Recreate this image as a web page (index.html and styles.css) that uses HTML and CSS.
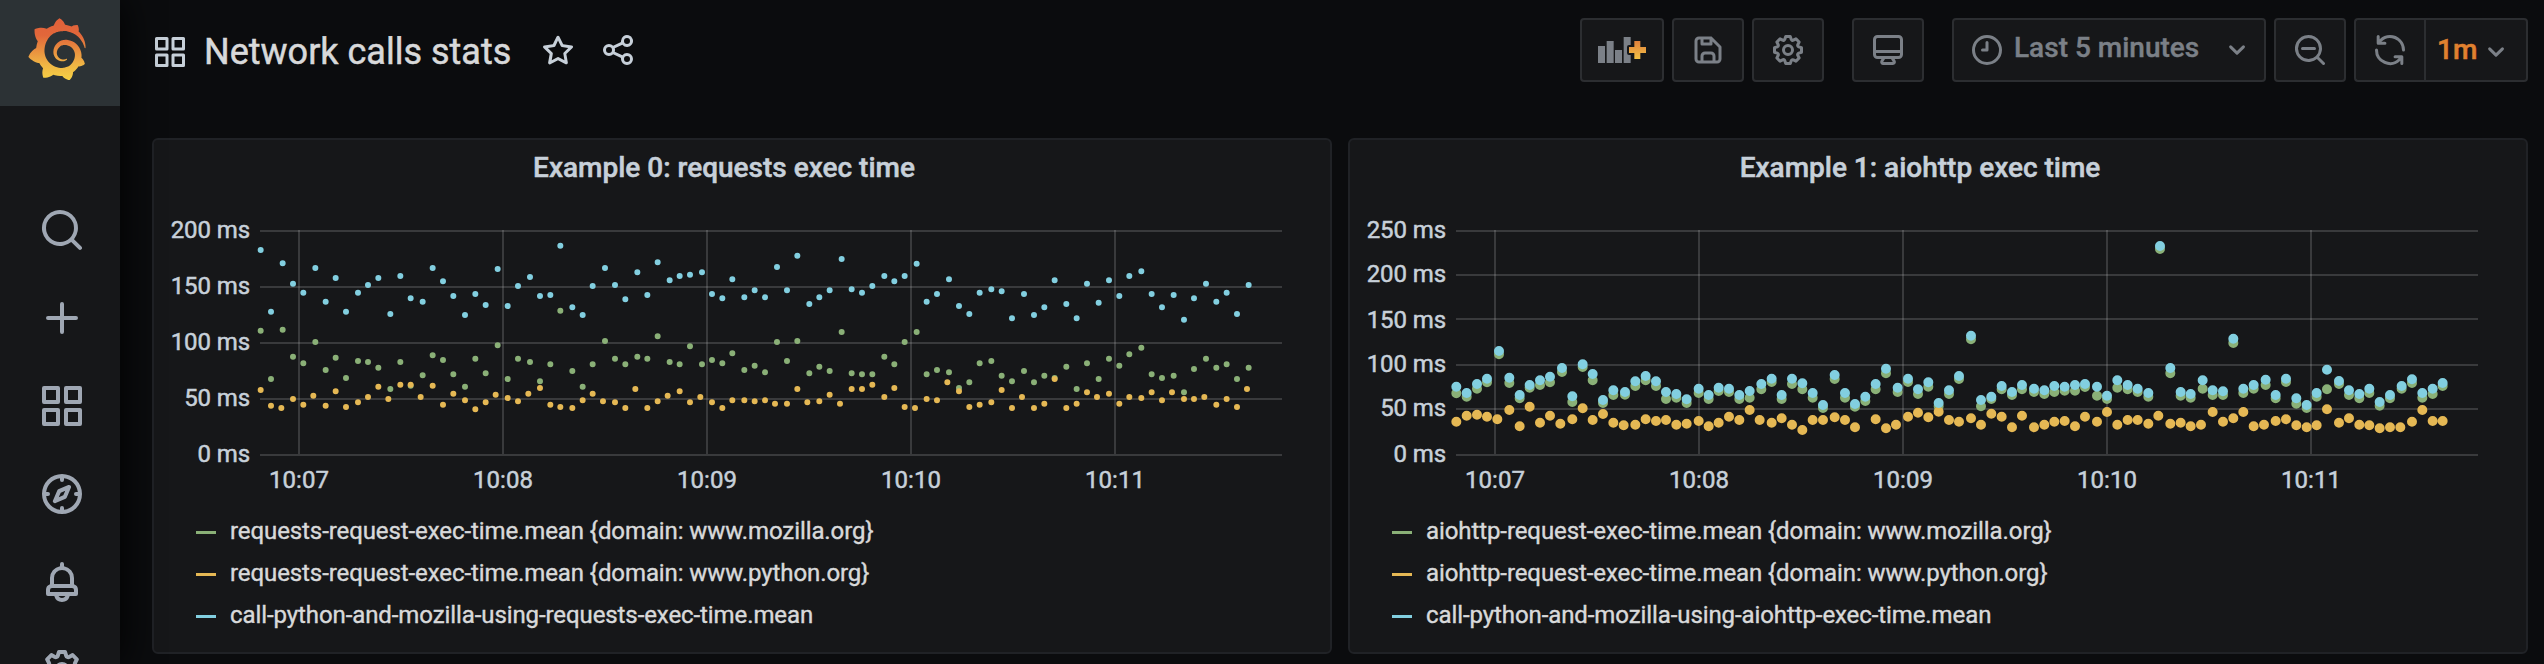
FILE: index.html
```html
<!DOCTYPE html>
<html lang="en">
<head>
<meta charset="utf-8">
<title>Network calls stats</title>
<link rel="stylesheet" href="styles.css">
</head>
<body>
<svg class="defs" width="0" height="0" aria-hidden="true">
  <defs>
    <symbol id="i-search" viewBox="0 0 24 24"><path d="M21.71,20.29,18,16.61A9,9,0,1,0,16.61,18l3.68,3.68a1,1,0,0,0,1.42,0A1,1,0,0,0,21.71,20.29ZM11,18a7,7,0,1,1,7-7A7,7,0,0,1,11,18Z"/></symbol>
    <symbol id="i-plus" viewBox="0 0 24 24"><path d="M19,11H13V5a1,1,0,0,0-2,0v6H5a1,1,0,0,0,0,2h6v6a1,1,0,0,0,2,0V13h6a1,1,0,0,0,0-2Z"/></symbol>
    <symbol id="i-apps" viewBox="0 0 24 24"><path d="M10,13H3a1,1,0,0,0-1,1v7a1,1,0,0,0,1,1h7a1,1,0,0,0,1-1V14A1,1,0,0,0,10,13ZM9,20H4V15H9ZM21,2H14a1,1,0,0,0-1,1v7a1,1,0,0,0,1,1h7a1,1,0,0,0,1-1V3A1,1,0,0,0,21,2ZM20,9H15V4h5Zm1,4H14a1,1,0,0,0-1,1v7a1,1,0,0,0,1,1h7a1,1,0,0,0,1-1V14A1,1,0,0,0,21,13Zm-1,7H15V15h5ZM10,2H3A1,1,0,0,0,2,3v7a1,1,0,0,0,1,1h7a1,1,0,0,0,1-1V3A1,1,0,0,0,10,2ZM9,9H4V4H9Z"/></symbol>
    <symbol id="i-compass" viewBox="0 0 24 24"><path d="M12,2A10,10,0,1,0,22,12,10,10,0,0,0,12,2Zm1,17.93V19a1,1,0,0,0-2,0v.93A8,8,0,0,1,4.07,13H5a1,1,0,0,0,0-2H4.07A8,8,0,0,1,11,4.07V5a1,1,0,0,0,2,0V4.07A8,8,0,0,1,19.93,11H19a1,1,0,0,0,0,2h.93A8,8,0,0,1,13,19.93ZM15.14,7.55l-5,2.12a1,1,0,0,0-.52.52l-2.12,5a1,1,0,0,0,.21,1.1,1,1,0,0,0,.7.3.93.93,0,0,0,.4-.09l5-2.12a1,1,0,0,0,.52-.52l2.12-5a1,1,0,0,0-1.31-1.31Zm-2.49,5.1-2.28,1,1-2.28,2.28-1Z"/></symbol>
    <symbol id="i-bell" viewBox="0 0 24 24"><path d="M18,13.18V10a6,6,0,0,0-5-5.91V3a1,1,0,0,0-2,0V4.09A6,6,0,0,0,6,10v3.18A3,3,0,0,0,4,16v2a1,1,0,0,0,1,1H8.14a4,4,0,0,0,7.72,0H19a1,1,0,0,0,1-1V16A3,3,0,0,0,18,13.18ZM8,10a4,4,0,0,1,8,0v3H8Zm4,10a2,2,0,0,1-1.72-1h3.44A2,2,0,0,1,12,20Zm6-3H6V16a1,1,0,0,1,1-1H17a1,1,0,0,1,1,1Z"/></symbol>
    <symbol id="i-cog" viewBox="0 0 24 24"><path d="M21.32,9.55l-1.89-.63.89-1.78A1,1,0,0,0,20.13,6L18,3.87a1,1,0,0,0-1.15-.19l-1.78.89-.63-1.89A1,1,0,0,0,13.5,2h-3a1,1,0,0,0-.95.68L8.92,4.57,7.14,3.68A1,1,0,0,0,6,3.87L3.87,6a1,1,0,0,0-.19,1.15l.89,1.78-1.89.63A1,1,0,0,0,2,10.5v3a1,1,0,0,0,.68.95l1.89.63-.89,1.78A1,1,0,0,0,3.87,18L6,20.13a1,1,0,0,0,1.15.19l1.78-.89.63,1.89a1,1,0,0,0,.95.68h3a1,1,0,0,0,.95-.68l.63-1.89,1.78.89A1,1,0,0,0,18,20.13L20.13,18a1,1,0,0,0,.19-1.15l-.89-1.78,1.89-.63A1,1,0,0,0,22,13.5v-3A1,1,0,0,0,21.32,9.55ZM20,12.78l-1.2.4A2,2,0,0,0,17.64,16l.57,1.14-1.1,1.1L16,17.64a2,2,0,0,0-2.79,1.16l-.4,1.2H11.22l-.4-1.2A2,2,0,0,0,8,17.64l-1.14.57-1.1-1.1L6.36,16A2,2,0,0,0,5.2,13.18L4,12.78V11.22l1.2-.4A2,2,0,0,0,6.36,8L5.79,6.89l1.1-1.1L8,6.36A2,2,0,0,0,10.82,5.2l.4-1.2h1.56l.4,1.2A2,2,0,0,0,16,6.36l1.14-.57,1.1,1.1L17.64,8a2,2,0,0,0,1.16,2.79l1.2.4ZM12,8a4,4,0,1,0,4,4A4,4,0,0,0,12,8Zm0,6a2,2,0,1,1,2-2A2,2,0,0,1,12,14Z"/></symbol>
    <symbol id="i-star" viewBox="0 0 24 24"><path d="M22,9.67A1,1,0,0,0,21.14,9l-5.69-.83L12.9,3a1,1,0,0,0-1.8,0L8.55,8.16,2.86,9a1,1,0,0,0-.81.68,1,1,0,0,0,.25,1l4.13,4-1,5.68A1,1,0,0,0,6.9,21.44L12,18.77l5.1,2.67a.93.93,0,0,0,.46.12,1,1,0,0,0,.59-.19,1,1,0,0,0,.4-1l-1-5.68,4.13-4A1,1,0,0,0,22,9.67Zm-6.15,4a1,1,0,0,0-.29.88l.72,4.2-3.76-2a1.06,1.06,0,0,0-.94,0l-3.76,2,.72-4.2a1,1,0,0,0-.29-.88l-3-3,4.21-.61a1,1,0,0,0,.76-.55L12,5.7l1.88,3.82a1,1,0,0,0,.76.55l4.21.61Z"/></symbol>
    <symbol id="i-share" viewBox="0 0 24 24"><path d="M18,14a4,4,0,0,0-3.08,1.48l-5.1-2.35a3.64,3.64,0,0,0,0-2.26l5.1-2.35A4,4,0,1,0,14,6a4.17,4.17,0,0,0,.07.71L8.79,9.14a4,4,0,1,0,0,5.72l5.28,2.43A4.17,4.17,0,0,0,14,18a4,4,0,1,0,4-4ZM18,4a2,2,0,1,1-2,2A2,2,0,0,1,18,4ZM6,14a2,2,0,1,1,2-2A2,2,0,0,1,6,14Zm12,6a2,2,0,1,1,2-2A2,2,0,0,1,18,20Z"/></symbol>
    <symbol id="i-save" viewBox="0 0 24 24"><path d="M20.71,9.29l-6-6a1,1,0,0,0-.32-.21A1.09,1.09,0,0,0,14,3H6A3,3,0,0,0,3,6V18a3,3,0,0,0,3,3H18a3,3,0,0,0,3-3V10A1,1,0,0,0,20.71,9.29ZM9,5h4V7H9Zm6,14H9V16a1,1,0,0,1,1-1h4a1,1,0,0,1,1,1Zm4-1a1,1,0,0,1-1,1H17V16a3,3,0,0,0-3-3H10a3,3,0,0,0-3,3v3H6a1,1,0,0,1-1-1V6A1,1,0,0,1,6,5H7V8A1,1,0,0,0,8,9h6a1,1,0,0,0,1-1V6.41l4,4Z"/></symbol>
    <symbol id="i-monitor" viewBox="0 0 24 24"><path d="M19,2H5A3,3,0,0,0,2,5V15a3,3,0,0,0,3,3H7.64l-.58,1a2,2,0,0,0,0,2,2,2,0,0,0,1.75,1h6.46A2,2,0,0,0,17,21a2,2,0,0,0,0-2l-.59-1H19a3,3,0,0,0,3-3V5A3,3,0,0,0,19,2ZM8.77,20,10,18H14l1.2,2ZM20,15a1,1,0,0,1-1,1H5a1,1,0,0,1-1-1V14H20Zm0-3H4V5A1,1,0,0,1,5,4H19a1,1,0,0,1,1,1Z"/></symbol>
    <symbol id="i-clock" viewBox="0 0 24 24"><path d="M12,2A10,10,0,1,0,22,12,10,10,0,0,0,12,2Zm0,18a8,8,0,1,1,8-8A8,8,0,0,1,12,20ZM12,6a1,1,0,0,0-1,1v4H9a1,1,0,0,0,0,2h3a1,1,0,0,0,1-1V7A1,1,0,0,0,12,6Z"/></symbol>
    <symbol id="i-zoomout" viewBox="0 0 24 24"><path d="M21.71,20.29,18,16.61A9,9,0,1,0,16.61,18l3.68,3.68a1,1,0,0,0,1.42-1.42ZM11,18a7,7,0,1,1,7-7A7,7,0,0,1,11,18Zm4-8H7a1,1,0,0,0,0,2h8a1,1,0,0,0,0-2Z"/></symbol>
    <symbol id="i-sync" viewBox="0 0 24 24"><path d="M19.91,15.51H15.38a1,1,0,0,0,0,2h2.4A8,8,0,0,1,4,12a1,1,0,1,0-2,0,10,10,0,0,0,16.88,7.23V21a1,1,0,0,0,2,0V16.5A1,1,0,0,0,19.91,15.51ZM12,2A10,10,0,0,0,5.12,4.77V3a1,1,0,0,0-2,0V7.5a1,1,0,0,0,1,1h4.5a1,1,0,0,0,0-2H6.22A8,8,0,0,1,20,12a1,1,0,0,0,2,0A10,10,0,0,0,12,2Z"/></symbol>
    <symbol id="i-down" viewBox="0 0 24 24"><path d="M17,9.17a1,1,0,0,0-1.41,0L12,12.71,8.46,9.17a1,1,0,0,0-1.41,0,1,1,0,0,0,0,1.42l4.24,4.24a1,1,0,0,0,1.42,0L17,10.59A1,1,0,0,0,17,9.17Z"/></symbol>
  </defs>
</svg>

<div class="app">
  <nav class="sidemenu">
    <a class="logo">
      <svg class="logo-mark" viewBox="0 0 351 365">
        <defs><linearGradient id="flame" x1="0" y1="1" x2="0" y2="0"><stop offset="0" stop-color="#f6d145"/><stop offset=".25" stop-color="#efb544"/><stop offset=".72" stop-color="#e2673a"/><stop offset="1" stop-color="#e0603a"/></linearGradient></defs>
        <path fill="url(#flame)" d="M342,161.2c-0.6-6.1-1.6-13.1-3.6-20.9c-2-7.7-5-16.2-9.4-25c-4.4-8.8-10.1-17.9-17.5-26.8c-2.9-3.5-6.1-6.9-9.5-10.2c5.1-20.3-6.2-37.9-6.2-37.9c-19.5-1.2-31.9,6.1-36.5,9.4c-0.8-0.3-1.5-0.7-2.3-1c-3.3-1.3-6.7-2.6-10.3-3.7c-3.5-1.1-7.1-2.1-10.8-3c-3.7-0.9-7.4-1.6-11.2-2.2c-0.7-0.1-1.3-0.2-2-0.3c-8.5-27.2-32.9-38.6-32.9-38.6c-27.3,17.3-32.4,41.5-32.4,41.5s-0.1,0.5-0.3,1.4c-1.5,0.4-3,0.9-4.5,1.3c-2.1,0.6-4.2,1.4-6.2,2.2c-2.1,0.8-4.1,1.6-6.2,2.5c-4.1,1.8-8.2,3.8-12.2,6c-3.9,2.2-7.7,4.6-11.4,7.1c-0.5-0.2-1-0.4-1-0.4c-37.8-14.4-71.3,2.9-71.3,2.9c-3.1,40.2,15.1,65.5,18.7,70.1c-0.9,2.5-1.7,5-2.5,7.5c-2.8,9.1-4.9,18.4-6.2,28.1c-0.2,1.4-0.4,2.8-0.5,4.2C18.8,192.7,8.5,228,8.5,228c29.1,33.5,63.1,35.6,63.1,35.6c0,0,0.1-0.1,0.1-0.1c4.3,7.7,9.3,15,14.9,21.9c2.4,2.9,4.8,5.6,7.4,8.3c-10.6,30.4,1.5,55.6,1.5,55.6c32.4,1.2,53.7-14.2,58.2-17.7c3.2,1.1,6.5,2.1,9.8,2.9c10,2.6,20.2,4.1,30.4,4.5c2.5,0.1,5.1,0.2,7.6,0.1l1.2,0l0.8,0l1.6,0l1.6-0.1l0,0.1c15.3,21.8,42.1,24.9,42.1,24.9c19.1-20.1,20.2-40.1,20.2-44.4l0,0c0,0,0-0.1,0-0.3c0-0.4,0-0.6,0-0.6l0,0c0-0.3,0-0.6,0-0.9c4-2.8,7.8-5.8,11.4-9.1c7.6-6.9,14.3-14.8,19.9-23.3c0.5-0.8,1-1.6,1.5-2.4c21.6,1.2,36.9-13.4,36.9-13.4c-3.6-22.5-16.4-33.5-19.1-35.6l0,0c0,0-0.1-0.1-0.3-0.2c-0.2-0.1-0.2-0.2-0.2-0.2c0,0,0,0,0,0c-0.1-0.1-0.3-0.2-0.5-0.3c0.1-1.4,0.2-2.7,0.3-4.1c0.2-2.4,0.2-4.9,0.2-7.3l0-1.8l0-0.9l0-0.5c0-0.6,0-0.4,0-0.6l-0.1-1.5l-0.1-2c0-0.7-0.1-1.3-0.2-1.9c-0.1-0.6-0.1-1.3-0.2-1.9l-0.2-1.9l-0.3-1.9c-0.4-2.5-0.8-4.9-1.4-7.4c-2.3-9.7-6.1-18.9-11-27.2c-5-8.3-11.2-15.6-18.3-21.8c-7-6.2-14.9-11.2-23.1-14.9c-8.3-3.7-16.9-6.1-25.5-7.2c-4.3-0.6-8.6-0.8-12.9-0.7l-1.6,0l-0.4,0c-0.1,0-0.6,0-0.5,0l-0.7,0l-1.6,0.1c-0.6,0-1.2,0.1-1.7,0.1c-2.2,0.2-4.4,0.5-6.5,0.9c-8.6,1.6-16.7,4.7-23.8,9c-7.1,4.3-13.3,9.6-18.3,15.6c-5,6-8.9,12.7-11.6,19.6c-2.7,6.9-4.2,14.1-4.6,21c-0.1,1.7-0.1,3.5-0.1,5.2c0,0.4,0,0.9,0,1.3l0.1,1.4c0.1,0.8,0.1,1.7,0.2,2.5c0.3,3.5,1,6.9,1.9,10.1c1.9,6.5,4.9,12.4,8.6,17.4c3.7,5,8.2,9.1,12.9,12.4c4.7,3.2,9.8,5.5,14.8,7c5,1.5,10,2.1,14.7,2.1c0.6,0,1.2,0,1.7,0c0.3,0,0.6,0,0.9,0c0.3,0,0.6,0,0.9-0.1c0.5,0,1-0.1,1.5-0.1c0.1,0,0.3,0,0.4-0.1l0.5-0.1c0.3,0,0.6-0.1,0.9-0.1c0.6-0.1,1.1-0.2,1.7-0.3c0.6-0.1,1.1-0.2,1.6-0.4c1.1-0.2,2.1-0.6,3.1-0.9c2-0.7,4-1.5,5.7-2.4c1.8-0.9,3.4-2,5-3c0.4-0.3,0.9-0.6,1.3-1c1.6-1.3,1.9-3.7,0.6-5.3c-1.1-1.4-3.1-1.8-4.7-0.9c-0.4,0.2-0.8,0.4-1.2,0.6c-1.4,0.7-2.8,1.3-4.3,1.8c-1.5,0.5-3.1,0.9-4.7,1.2c-0.8,0.1-1.6,0.2-2.5,0.3c-0.4,0-0.8,0.1-1.3,0.1c-0.4,0-0.9,0-1.2,0c-0.4,0-0.8,0-1.2,0c-0.5,0-1,0-1.5-0.1c0,0-0.3,0-0.1,0l-0.2,0l-0.3,0c-0.2,0-0.5,0-0.7-0.1c-0.5-0.1-0.9-0.1-1.4-0.2c-3.7-0.5-7.4-1.6-10.9-3.2c-3.6-1.6-7-3.8-10.1-6.6c-3.1-2.8-5.8-6.1-7.9-9.9c-2.1-3.8-3.6-8-4.3-12.4c-0.3-2.2-0.5-4.5-0.4-6.7c0-0.6,0.1-1.2,0.1-1.8c0,0.2,0-0.1,0-0.1l0-0.2l0-0.5c0-0.3,0.1-0.6,0.1-0.9c0.1-1.2,0.3-2.4,0.5-3.6c1.7-9.6,6.5-19,13.9-26.1c1.9-1.8,3.9-3.4,6-4.9c2.1-1.5,4.4-2.8,6.8-3.9c2.4-1.1,4.8-2,7.4-2.7c2.5-0.7,5.1-1.1,7.8-1.4c1.3-0.1,2.6-0.2,4-0.2c0.4,0,0.6,0,0.9,0l1.1,0l0.7,0c0.3,0,0,0,0.1,0l0.3,0l1.1,0.1c2.9,0.2,5.7,0.6,8.5,1.3c5.6,1.2,11.1,3.3,16.2,6.1c10.2,5.7,18.9,14.5,24.2,25.1c2.7,5.3,4.6,11,5.5,16.9c0.2,1.5,0.4,3,0.5,4.5l0.1,1.1l0.1,1.1c0,0.4,0,0.8,0,1.1c0,0.4,0,0.8,0,1.1l0,1l0,1.1c0,0.7-0.1,1.9-0.1,2.6c-0.1,1.6-0.3,3.3-0.5,4.9c-0.2,1.6-0.5,3.2-0.8,4.8c-0.3,1.6-0.7,3.2-1.1,4.7c-0.8,3.1-1.8,6.2-3,9.3c-2.4,6-5.6,11.8-9.4,17.1c-7.7,10.6-18.2,19.2-30.2,24.7c-6,2.7-12.3,4.7-18.8,5.7c-3.2,0.6-6.5,0.9-9.8,1l-0.6,0l-0.5,0l-1.1,0l-1.6,0l-0.8,0c0.4,0-0.1,0-0.1,0l-0.3,0c-1.8,0-3.5-0.1-5.3-0.3c-7-0.5-13.9-1.8-20.7-3.7c-6.7-1.9-13.2-4.6-19.4-7.8c-12.3-6.6-23.4-15.6-32-26.5c-4.3-5.4-8.1-11.3-11.2-17.4c-3.1-6.1-5.6-12.6-7.4-19.1c-1.8-6.6-2.9-13.3-3.4-20.1l-0.1-1.3l0-0.3l0-0.3l0-0.6l0-1.1l0-0.3l0-0.4l0-0.8l0-1.6l0-0.3c0,0,0,0.1,0-0.1l0-0.6c0-0.8,0-1.7,0-2.5c0.1-3.3,0.4-6.8,0.8-10.2c0.4-3.4,1-6.9,1.7-10.3c0.7-3.4,1.5-6.8,2.5-10.2c1.9-6.7,4.3-13.2,7.1-19.3c5.7-12.2,13.1-23.1,22-31.8c2.2-2.2,4.5-4.2,6.9-6.2c2.4-1.9,4.9-3.7,7.5-5.4c2.5-1.7,5.2-3.2,7.9-4.6c1.3-0.7,2.7-1.4,4.1-2c0.7-0.3,1.4-0.6,2.1-0.9c0.7-0.3,1.4-0.6,2.1-0.9c2.8-1.2,5.7-2.2,8.7-3.1c0.7-0.2,1.5-0.4,2.2-0.7c0.7-0.2,1.5-0.4,2.2-0.6c1.5-0.4,3-0.8,4.5-1.1c0.7-0.2,1.5-0.3,2.3-0.5c0.8-0.2,1.5-0.3,2.3-0.5c0.8-0.1,1.5-0.3,2.3-0.4l1.1-0.2l1.2-0.2c0.8-0.1,1.5-0.2,2.3-0.3c0.9-0.1,1.7-0.2,2.6-0.3c0.7-0.1,1.9-0.2,2.6-0.3c0.5-0.1,1.1-0.1,1.6-0.2l1.1-0.1l0.5-0.1l0.6,0c0.9-0.1,1.7-0.1,2.6-0.2l1.3-0.1c0,0,0.5,0,0.1,0l0.3,0l0.6,0c0.7,0,1.5-0.1,2.2-0.1c2.9-0.1,5.9-0.1,8.8,0c5.8,0.2,11.5,0.9,17,1.9c11.1,2.1,21.5,5.6,31,10.3c9.5,4.6,17.9,10.3,25.3,16.5c0.5,0.4,0.9,0.8,1.4,1.2c0.4,0.4,0.9,0.8,1.3,1.2c0.9,0.8,1.7,1.6,2.6,2.4c0.9,0.8,1.7,1.6,2.5,2.4c0.8,0.8,1.6,1.6,2.4,2.5c3.1,3.3,6,6.6,8.6,10c5.2,6.7,9.4,13.5,12.7,19.9c0.2,0.4,0.4,0.8,0.6,1.2c0.2,0.4,0.4,0.8,0.6,1.2c0.4,0.8,0.8,1.6,1.1,2.4c0.4,0.8,0.7,1.5,1.1,2.3c0.3,0.8,0.7,1.5,1,2.3c1.2,3,2.4,5.9,3.3,8.6c1.5,4.4,2.6,8.3,3.5,11.7c0.3,1.4,1.6,2.3,3,2.1c1.5-0.1,2.6-1.3,2.6-2.8C342.6,170.4,342.5,166.1,342,161.2z"/>
      </svg>
    </a>
    <div class="side-items">
      <svg class="side-icon"><use href="#i-search"/></svg>
      <svg class="side-icon"><use href="#i-plus"/></svg>
      <svg class="side-icon"><use href="#i-apps"/></svg>
      <svg class="side-icon"><use href="#i-compass"/></svg>
      <svg class="side-icon"><use href="#i-bell"/></svg>
      <svg class="side-icon"><use href="#i-cog"/></svg>
    </div>
  </nav>

  <main class="main">
    <header class="navbar">
      <svg class="icon nav-apps"><use href="#i-apps"/></svg>
      <h1 class="nav-title">Network calls stats</h1>
      <svg class="icon nav-star"><use href="#i-star"/></svg>
      <svg class="icon nav-share"><use href="#i-share"/></svg>
      <div class="toolbar">
        <button class="btn btn-add">
          <svg class="add-icon" viewBox="114 111 144 78">
            <defs>
              <linearGradient id="plus" x1="0" y1="0" x2="0" y2="1"><stop offset="0" stop-color="#e0803c"/><stop offset="1" stop-color="#f2c144"/></linearGradient>
            </defs>
            <path class="add-bars" d="M114 138h21v51h-21zM140 123h21v66h-21zM165 150h21v39h-21zM191 111h21v78h-21z"/>
            <path class="add-gap" d="M223 123h18v18h17v18h-17v18h-18v-18h-16v-18h16z"/>
            <path fill="url(#plus)" d="M223 123h18v18h17v18h-17v18h-18v-18h-16v-18h16z"/>
          </svg>
        </button>
        <button class="btn"><svg class="icon"><use href="#i-save"/></svg></button>
        <button class="btn"><svg class="icon"><use href="#i-cog"/></svg></button>
        <button class="btn btn-tv"><svg class="icon"><use href="#i-monitor"/></svg></button>
        <button class="btn btn-time"><svg class="icon"><use href="#i-clock"/></svg><span class="time-label">Last 5 minutes</span><svg class="icon"><use href="#i-down"/></svg></button>
        <button class="btn"><svg class="icon"><use href="#i-zoomout"/></svg></button>
        <div class="refresh">
          <button class="btn btn-sync"><svg class="icon"><use href="#i-sync"/></svg></button>
          <button class="btn btn-interval"><span class="interval">1m</span><svg class="icon"><use href="#i-down"/></svg></button>
        </div>
      </div>
    </header>

    <div class="grid">
      <section class="panel">
        <h2 class="panel-title">Example 0: requests exec time</h2>
        <svg class="chart" viewBox="154 200 1176 300">
          <path class="lines" d="M260 231H1282M260 287H1282M260 343H1282M260 399H1282M260 455H1282"/>
          <path class="lines" d="M299 230V454M503 230V454M707 230V454M911 230V454M1115 230V454"/>
          <g class="y-axis"><text x="250" y="238">200 ms</text><text x="250" y="294">150 ms</text><text x="250" y="350">100 ms</text><text x="250" y="406">50 ms</text><text x="250" y="462">0 ms</text></g>
          <g class="x-axis"><text x="299" y="488">10:07</text><text x="503" y="488">10:08</text><text x="707" y="488">10:09</text><text x="911" y="488">10:10</text><text x="1115" y="488">10:11</text></g>
          <g class="dots dots-small" transform="translate(150 210) scale(.33333)">
            <g class="green">
              <path d="M332 362h0M363 507h0M398 359h0M429 440h0M460 460h0M496 396h0M527 480h0M557 443h0M588 504h0M624 453h0M654 456h0M685 473h0M721 537h0M751 456h0M782 527h0M818 496h0M848 436h0M879 450h0M910 493h0M945 530h0M976 446h0M1007 490h0M1043 406h0M1073 507h0M1104 446h0M1140 456h0M1170 514h0"/>
              <path transform="translate(1170)" d="M31 463h0M61 302h0M97 483h0M128 530h0M158 463h0M195 393h0M225 446h0M256 463h0M292 440h0M322 446h0M353 379h0M389 456h0M419 463h0M450 409h0M486 463h0M516 450h0M547 460h0M577 430h0M613 480h0M644 467h0M675 487h0M711 396h0M741 453h0M772 393h0M808 490h0M838 470h0M869 483h0M905 366h0M935 490h0M966 493h0M997 493h0M1033 440h0M1063 463h0M1094 396h0M1130 366h0M1160 493h0M1191 480h0"/>
              <path transform="translate(2340)" d="M57 487h0M87 534h0M118 517h0M149 460h0M184 453h0M215 497h0M246 514h0M282 483h0M312 517h0M343 497h0M374 504h0M409 470h0M440 537h0M471 460h0M506 507h0M537 446h0M568 467h0M598 433h0M634 413h0M665 493h0M696 504h0M731 497h0M762 547h0M792 477h0M828 446h0M859 473h0M890 463h0M921 507h0M956 473h0"/>
            </g>
            <g class="yellow">
              <path d="M332 540h0M363 587h0M394 594h0M429 567h0M460 584h0M490 557h0M527 587h0M557 544h0M588 591h0M624 577h0M654 561h0M685 530h0M715 567h0M751 524h0M782 524h0M812 561h0M848 527h0M879 584h0M910 551h0M945 571h0M976 598h0M1007 577h0M1037 554h0M1073 564h0M1104 574h0M1135 551h0M1170 534h0"/>
              <path transform="translate(1170)" d="M31 584h0M61 591h0M97 594h0M128 571h0M158 551h0M189 574h0M225 577h0M256 594h0M286 537h0M322 594h0M353 574h0M383 557h0M419 544h0M450 577h0M481 561h0M516 577h0M547 594h0M577 571h0M613 571h0M644 574h0M675 571h0M705 581h0M741 581h0M772 537h0M802 577h0M838 574h0M869 554h0M900 581h0M935 537h0M966 537h0M997 524h0M1033 561h0M1063 534h0M1094 591h0M1125 594h0M1160 567h0M1191 571h0"/>
              <path transform="translate(2340)" d="M52 517h0M87 544h0M118 591h0M149 584h0M184 577h0M215 540h0M246 594h0M276 561h0M312 594h0M343 581h0M374 507h0M409 594h0M440 581h0M471 547h0M501 561h0M537 551h0M568 581h0M598 561h0M634 564h0M665 547h0M696 571h0M726 547h0M762 567h0M792 567h0M823 561h0M859 584h0M890 567h0M921 591h0M951 537h0"/>
            </g>
            <g class="blue">
              <path d="M332 120h0M363 305h0M398 160h0M429 221h0M460 248h0M496 174h0M527 275h0M557 204h0M588 305h0M624 248h0M654 225h0M685 204h0M721 312h0M751 198h0M782 265h0M818 275h0M848 174h0M879 214h0M910 258h0M945 315h0M976 252h0M1007 285h0M1043 177h0M1073 288h0M1104 228h0M1140 201h0M1170 258h0"/>
              <path transform="translate(1170)" d="M31 255h0M61 107h0M97 292h0M128 315h0M158 228h0M195 174h0M225 225h0M256 268h0M292 187h0M322 255h0M353 157h0M389 211h0M419 198h0M450 194h0M486 187h0M516 252h0M547 265h0M577 208h0M613 262h0M644 241h0M675 262h0M711 171h0M741 241h0M772 137h0M808 282h0M838 262h0M869 241h0M905 147h0M935 238h0M966 248h0M997 228h0M1033 198h0M1063 214h0M1094 198h0M1130 161h0M1160 275h0M1191 252h0"/>
              <path transform="translate(2340)" d="M57 208h0M87 288h0M118 312h0M149 248h0M184 238h0M215 244h0M246 325h0M282 252h0M312 315h0M343 292h0M374 211h0M409 282h0M440 325h0M471 221h0M506 278h0M537 211h0M568 258h0M598 198h0M634 184h0M665 252h0M696 292h0M731 255h0M762 329h0M792 265h0M828 221h0M859 275h0M890 248h0M921 312h0M956 225h0"/>
            </g>
          </g>
        </svg>
        <ul class="legend">
          <li class="legend-item"><i class="swatch green"></i>requests-request-exec-time.mean {domain: www.mozilla.org}</li>
          <li class="legend-item"><i class="swatch yellow"></i>requests-request-exec-time.mean {domain: www.python.org}</li>
          <li class="legend-item"><i class="swatch blue"></i>call-python-and-mozilla-using-requests-exec-time.mean</li>
        </ul>
      </section>

      <section class="panel">
        <h2 class="panel-title">Example 1: aiohttp exec time</h2>
        <svg class="chart" viewBox="1350 200 1176 300">
          <path class="lines" d="M1456 231H2478M1456 275H2478M1456 319H2478M1456 365H2478M1456 409H2478M1456 455H2478"/>
          <path class="lines" d="M1495 230V454M1699 230V454M1903 230V454M2107 230V454M2311 230V454"/>
          <g class="y-axis"><text x="1446" y="238">250 ms</text><text x="1446" y="282">200 ms</text><text x="1446" y="328">150 ms</text><text x="1446" y="372">100 ms</text><text x="1446" y="416">50 ms</text><text x="1446" y="462">0 ms</text></g>
          <g class="x-axis"><text x="1495" y="488">10:07</text><text x="1699" y="488">10:08</text><text x="1903" y="488">10:09</text><text x="2107" y="488">10:10</text><text x="2311" y="488">10:11</text></g>
          <g class="dots dots-large" transform="translate(1340 210) scale(.33333)">
            <g class="green">
              <path d="M349 550h0M380 560h0M411 536h0M441 517h0M477 433h0M508 519h0M539 565h0M569 533h0M600 525h0M630 517h0M666 486h0M697 576h0M728 471h0M758 511h0M789 579h0M820 555h0M855 554h0M886 528h0M917 511h0M948 528h0M978 567h0M1009 563h0M1040 579h0M1076 549h0M1106 567h0M1136 543h0M1167 546h0"/>
              <path transform="translate(1200)" d="M-2 567h0M29 563h0M64 538h0M95 516h0M125 567h0M156 522h0M187 538h0M218 563h0M249 594h0M284 507h0M315 563h0M345 590h0M376 573h0M407 538h0M438 490h0M473 546h0M504 516h0M534 552h0M565 530h0M596 589h0M627 552h0M657 507h0M693 388h0M723 589h0M754 567h0M785 538h0M816 555h0M846 538h0M882 546h0M913 552h0M943 546h0M974 542h0M1005 542h0M1035 531h0M1071 557h0M1101 567h0M1132 533h0M1163 538h0M1193 546h0"/>
              <path transform="translate(2400)" d="M25 560h0M60 117h0M91 490h0M122 557h0M152 563h0M188 536h0M218 555h0M249 555h0M280 399h0M310 549h0M341 536h0M377 525h0M407 565h0M438 516h0M469 581h0M500 594h0M530 560h0M561 538h0M597 522h0M627 555h0M658 565h0M688 549h0M719 587h0M750 565h0M785 536h0M816 519h0M847 563h0M878 552h0M908 528h0"/>
            </g>
            <g class="yellow">
              <path d="M349 635h0M380 617h0M411 614h0M441 620h0M472 628h0M508 600h0M539 649h0M569 590h0M600 638h0M630 617h0M661 641h0M697 628h0M728 595h0M758 630h0M789 612h0M820 638h0M851 646h0M886 644h0M917 628h0M948 633h0M978 630h0M1009 644h0M1040 641h0M1076 633h0M1106 649h0M1136 638h0M1167 620h0"/>
              <path transform="translate(1200)" d="M-2 630h0M29 600h0M59 630h0M95 638h0M125 625h0M156 644h0M187 660h0M218 630h0M249 630h0M284 622h0M315 630h0M345 652h0M407 628h0M438 655h0M468 644h0M504 620h0M534 608h0M565 622h0M596 605h0M627 630h0M657 635h0M693 625h0M723 644h0M754 611h0M785 620h0M816 652h0M846 617h0M882 652h0M913 644h0M943 635h0M974 633h0M1005 649h0M1035 620h0M1071 635h0M1101 606h0M1132 644h0M1163 630h0M1193 630h0"/>
              <path transform="translate(2400)" d="M25 641h0M55 617h0M91 641h0M122 638h0M152 649h0M183 644h0M218 606h0M249 635h0M280 625h0M310 606h0M341 649h0M372 644h0M407 633h0M438 628h0M469 646h0M500 652h0M530 646h0M561 598h0M597 638h0M627 625h0M658 644h0M688 646h0M719 655h0M750 652h0M781 652h0M816 635h0M847 600h0M878 633h0M908 633h0"/>
            </g>
            <g class="blue">
              <path d="M349 530h0M380 549h0M411 522h0M441 506h0M477 423h0M508 503h0M539 555h0M569 525h0M600 511h0M630 500h0M666 474h0M697 559h0M728 463h0M758 492h0M789 570h0M820 541h0M855 546h0M886 514h0M917 498h0M948 514h0M978 546h0M1009 552h0M1040 568h0M1076 536h0M1106 555h0M1136 533h0M1167 536h0"/>
              <path transform="translate(1200)" d="M-2 555h0M29 543h0M64 522h0M95 506h0M125 555h0M156 506h0M187 520h0M218 549h0M249 585h0M284 495h0M315 549h0M345 582h0M376 560h0M407 522h0M438 476h0M473 533h0M504 506h0M534 538h0M565 517h0M596 579h0M627 541h0M657 498h0M693 377h0M723 570h0M754 560h0M785 528h0M816 546h0M846 525h0M882 536h0M913 541h0M943 528h0M974 530h0M1005 525h0M1035 522h0M1071 530h0M1101 557h0M1132 511h0M1163 525h0M1193 536h0"/>
              <path transform="translate(2400)" d="M25 549h0M60 108h0M91 474h0M122 546h0M152 552h0M188 511h0M218 541h0M249 544h0M280 386h0M310 536h0M341 525h0M377 509h0M407 555h0M438 506h0M469 565h0M500 585h0M530 549h0M561 479h0M597 513h0M627 541h0M658 552h0M688 536h0M719 576h0M750 555h0M785 528h0M816 508h0M847 549h0M878 536h0M908 519h0"/>
            </g>
          </g>
        </svg>
        <ul class="legend">
          <li class="legend-item"><i class="swatch green"></i>aiohttp-request-exec-time.mean {domain: www.mozilla.org}</li>
          <li class="legend-item"><i class="swatch yellow"></i>aiohttp-request-exec-time.mean {domain: www.python.org}</li>
          <li class="legend-item"><i class="swatch blue"></i>call-python-and-mozilla-using-aiohttp-exec-time.mean</li>
        </ul>
      </section>
    </div>
  </main>
</div>
</body>
</html>
```
FILE: styles.css
```css
* { box-sizing: border-box; }
html, body { margin: 0; height: 100%; overflow: hidden; }
body {
  background: #0b0c0e;
  color: #d8d9da;
  font-family: Roboto, "Liberation Sans", sans-serif;
}
.defs { display: block; }
.app { display: flex; height: 100vh; overflow: hidden; }

.sidemenu {
  flex: none;
  width: 120px;
  background: #161719;
  box-shadow: 0 0 40px #000;
  z-index: 1;
}
.logo {
  display: flex;
  height: 106px;
  padding: 17.5px 0 0 26.5px;
  background: #2c3235;
}
.logo-mark { width: 60px; height: 62.4px; }
.side-items {
  display: flex;
  flex-direction: column;
  gap: 40px;
  padding: 100px 0 0 38px;
}
.side-icon { flex: none; width: 48px; height: 48px; fill: #9fa7b3; }

.main {
  flex: 1;
  display: flex;
  flex-direction: column;
  padding: 18px 16px 10px 32px;
}
.icon { flex: none; width: 36px; height: 36px; fill: #7b8087; }

.navbar { display: flex; align-items: flex-start; height: 120px; flex: none; }
.nav-apps, .nav-star, .nav-share { fill: #c7d0d9; }
.nav-apps { margin-top: 16px; }
.nav-title {
  width: 336px;
  margin: 0 0 0 16px;
  padding-top: 13px;
  font-size: 36px;
  line-height: 42px;
  font-weight: 400;
  white-space: nowrap;
  -webkit-text-stroke: .5px;
}
.nav-star { margin: 14px 0 0; }
.nav-share { margin: 14px 0 0 24px; }

.toolbar { display: flex; gap: 8px; margin-left: auto; }
.btn {
  display: flex;
  align-items: center;
  justify-content: center;
  width: 72px;
  height: 64px;
  padding: 0;
  border: 2px solid #2c2e31;
  border-radius: 4px;
  background: #161719;
  color: #7b8087;
  font: 500 28px/32px Roboto, "Liberation Sans", sans-serif;
}
.btn-add { width: 84px; }
.add-icon { width: 48px; height: 26px; }
.add-bars { fill: #7b8087; }
.add-gap { fill: none; stroke: #161719; stroke-width: 12; stroke-linejoin: round; }
.btn-tv { margin: 0 20px; }
.btn-time { width: 314px; justify-content: flex-start; padding-left: 15px; }
.time-label {
  width: 205px;
  margin: -4px 0 0 9px;
  text-align: left;
  -webkit-text-stroke: .4px;
}
.refresh { display: flex; }
.btn-sync { border-right: 0; border-radius: 4px 0 0 4px; width: 70px; }
.btn-interval { width: 104px; border-radius: 0 4px 4px 0; justify-content: flex-start; padding-left: 11px; }
.btn-interval .icon { margin: 4px 0 0 1px; }
.interval { color: #e0812f; -webkit-text-stroke: .5px; }

.grid { flex: 1; display: grid; grid-template-columns: 1fr 1fr; gap: 16px; }
.panel {
  display: flex;
  flex-direction: column;
  border: 2px solid #202226;
  border-radius: 6px;
  background: #161719;
}
.panel-title {
  height: 60px;
  margin: 0;
  padding: 12px 36px 0 0;
  color: #c7d0d9;
  font-size: 28px;
  line-height: 32px;
  font-weight: 500;
  text-align: center;
  -webkit-text-stroke: .5px;
}
.chart { display: block; flex: none; width: 1176px; height: 300px; overflow: visible; }
.lines { stroke: #c8c8c8; stroke-opacity: .2; stroke-width: 2; }
.y-axis, .x-axis { fill: #c7d0d9; stroke: #c7d0d9; stroke-width: .5px; font-size: 24px; }
.y-axis { text-anchor: end; letter-spacing: -.1px; }
.x-axis { text-anchor: middle; }
.dots { fill: none; stroke-linecap: round; }
.dots-small { stroke-width: 18; }
.dots-large { stroke-width: 30; }
.green { stroke: #8ab077; background: #8ab077; }
.yellow { stroke: #e5b854; background: #e5b854; }
.blue { stroke: #82cfe0; background: #82cfe0; }

.legend { margin: 10px 0 0; padding: 0 0 0 42px; list-style: none; }
.legend-item {
  display: flex;
  align-items: center;
  height: 42px;
  font-size: 24px;
  letter-spacing: -.09px;
  white-space: nowrap;
  -webkit-text-stroke: .4px;
}
.swatch { width: 20px; height: 3px; margin: 3px 14px 0 0; }
```
